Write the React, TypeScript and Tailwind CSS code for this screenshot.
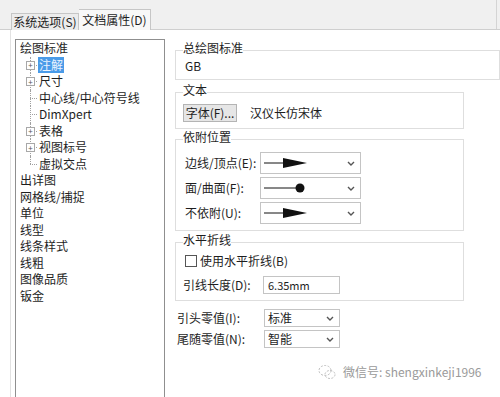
const font = "font-['Noto_Sans_CJK_SC','Liberation_Sans',sans-serif]";

function Chevron() {
  return (
    <svg width="8" height="5" viewBox="0 0 8 5" className="shrink-0">
      <path d="M1 1l3 3 3-3" stroke="#555" strokeWidth="1.4" fill="none" />
    </svg>
  );
}

function ArrowGlyph() {
  return (
    <svg width="46" height="12" viewBox="0 0 46 12">
      <line x1="0" y1="6" x2="22" y2="6" stroke="#111" strokeWidth="1" />
      <polygon points="19,1 43,6 19,11" fill="#111" />
    </svg>
  );
}

function DotGlyph() {
  return (
    <svg width="46" height="12" viewBox="0 0 46 12">
      <line x1="0" y1="6" x2="34" y2="6" stroke="#111" strokeWidth="1" />
      <circle cx="36" cy="6" r="4.5" fill="#111" />
    </svg>
  );
}

function PlusBox() {
  return (
    <span className="flex h-[9px] w-[9px] items-center justify-center border border-[#a8a8a8] bg-white text-[8px] leading-none text-[#555]">
      +
    </span>
  );
}

type Child = { label: string; plus?: boolean; active?: boolean; last?: boolean };

const children: Child[] = [
  { label: "注解", plus: true, active: true },
  { label: "尺寸", plus: true },
  { label: "中心线/中心符号线" },
  { label: "DimXpert" },
  { label: "表格", plus: true },
  { label: "视图标号", plus: true },
  { label: "虚拟交点", last: true },
];

const topItems = ["出详图", "网格线/捕捉", "单位", "线型", "线条样式", "线粗", "图像品质", "钣金"];

function TreeChild({ item }: { item: Child }) {
  return (
    <div className="flex h-[16.5px] items-center">
      <div className="relative h-full w-[17px] shrink-0">
        <span
          className={`absolute left-[9px] top-0 w-0 border-l border-dotted border-[#a0a0a0] ${item.last ? "h-1/2" : "h-full"}`}
        />
        <span className="absolute left-[9px] top-1/2 w-[7px] border-t border-dotted border-[#a0a0a0]" />
        {item.plus && (
          <span className="absolute left-[5px] top-[4px]">
            <PlusBox />
          </span>
        )}
      </div>
      <span className={item.active ? "bg-[#4a9be8] px-[1px] text-[#eaf3ff]" : "px-[1px]"}>{item.label}</span>
    </div>
  );
}

function Select({ children: c, w }: { children: React.ReactNode; w: string }) {
  return (
    <div className={`flex h-full ${w} items-center justify-between border border-[#c4c4c4] bg-white pl-[3px] pr-[5px]`}>
      {c}
      <Chevron />
    </div>
  );
}

export default function App() {
  return (
    <div className={`relative h-[397px] w-[500px] overflow-hidden bg-white text-[12px] text-[#1e1e1e] ${font}`}>
      {/* tab strip */}
      <div className="flex h-[30px] items-end border-b border-[#cfcfcf] bg-[#f0f0f0] pl-[11px] pr-[3px]">
        <div className="-mb-px flex h-[17px] w-[68px] items-center justify-center border border-b-0 border-[#c6c6c6] bg-[#ececec] leading-none">
          系统选项(S)
        </div>
        <div className="-mb-px flex h-[21px] w-[72px] items-center justify-center border border-b-0 border-l-0 border-[#c6c6c6] bg-[#f8f8f8] leading-none">
          文档属性(D)
        </div>
        <div className="h-full flex-1 border-r border-[#d4d4d4]" />
      </div>

      {/* body */}
      <div className="flex h-[367px] pl-[10px]">
        <div className="flex flex-1 border-l border-[#e2e2e2] pl-[4px]">
          {/* tree */}
          <div className="mt-[9px] h-[360px] w-[150px] shrink-0 border border-[#8f8f8f] bg-white pl-[4px] leading-[16.5px]">
            <div className="h-[16.5px]">绘图标准</div>
            <div className="pl-[1px]">
              {children.map((c) => (
                <TreeChild key={c.label} item={c} />
              ))}
            </div>
            {topItems.map((t) => (
              <div key={t} className="h-[16.5px]">
                {t}
              </div>
            ))}
          </div>

          {/* right pane */}
          <div className="flex flex-1 flex-col pl-[10px] leading-[16px]">
            <fieldset className="mt-[10px] h-[40px] border border-[#dedede] pl-[7px]">
              <legend className="pb-[4px] leading-[16px]">总绘图标准</legend>
              <div className="ml-[2px] leading-[12px]">GB</div>
            </fieldset>

            <fieldset className="mt-[2px] h-[47px] w-[289px] border border-[#dedede] pl-[7px]">
              <legend className="pb-[4px] leading-[16px]">文本</legend>
              <div className="mt-[2px] flex items-center">
                <div className="flex h-[18px] w-[54px] items-center justify-center border border-[#b4b4b4] bg-[#e6e6e6]">
                  字体(F)...
                </div>
                <span className="ml-[13px]">汉仪长仿宋体</span>
              </div>
            </fieldset>

            <fieldset className="h-[102px] w-[289px] border border-[#dedede] pl-[7px]">
              <legend className="pb-[4px] leading-[16px]">依附位置</legend>
              <div className="ml-[2px] flex flex-col gap-[3px] pt-[3px]">
                <div className="flex h-[22px] items-center">
                  <span className="w-[75px]">边线/顶点(E):</span>
                  <Select w="w-[101px]">
                    <ArrowGlyph />
                  </Select>
                </div>
                <div className="flex h-[22px] items-center">
                  <span className="w-[75px]">面/曲面(F):</span>
                  <Select w="w-[101px]">
                    <DotGlyph />
                  </Select>
                </div>
                <div className="flex h-[22px] items-center">
                  <span className="w-[75px]">不依附(U):</span>
                  <Select w="w-[101px]">
                    <ArrowGlyph />
                  </Select>
                </div>
              </div>
            </fieldset>

            <fieldset className="mt-[1px] h-[69px] w-[289px] border border-[#dedede] pl-[7px]">
              <legend className="pb-[4px] leading-[16px]">水平折线</legend>
              <div className="ml-[2px] flex h-[18px] items-center">
                <span className="h-[12px] w-[12px] border border-[#555] bg-white" />
                <span className="ml-[3px]">使用水平折线(B)</span>
              </div>
              <div className="mt-[6px] flex h-[18px] items-center">
                <span className="w-[80px]">引线长度(D):</span>
                <div className="flex h-full w-[77px] items-center border border-[#c4c4c4] bg-white pl-[4px] text-[11px]">
                  6.35mm
                </div>
              </div>
            </fieldset>

            <div className="ml-[2px] mt-[8px] flex flex-col gap-[3px]">
              <div className="flex h-[18px] items-center">
                <span className="w-[87px]">引头零值(I):</span>
                <Select w="w-[76px] bg-[#f2f2f2]">
                  <span>标准</span>
                </Select>
              </div>
              <div className="flex h-[18px] items-center">
                <span className="w-[87px]">尾随零值(N):</span>
                <Select w="w-[76px] bg-[#f2f2f2]">
                  <span>智能</span>
                </Select>
              </div>
            </div>
          </div>
        </div>
      </div>

      {/* watermark */}
      <div className="absolute left-[318px] top-[363px] flex items-center gap-[7px] text-[12px] text-[#9a9a9a]">
        <svg width="18" height="16" viewBox="0 0 18 16">
          <ellipse cx="7" cy="6.5" rx="6" ry="5" fill="none" stroke="#bdbdbd" strokeDasharray="2 1.5" />
          <ellipse cx="12" cy="10.5" rx="5" ry="4" fill="none" stroke="#bdbdbd" strokeDasharray="2 1.5" />
        </svg>
        <span>微信号: shengxinkeji1996</span>
      </div>
    </div>
  );
}
